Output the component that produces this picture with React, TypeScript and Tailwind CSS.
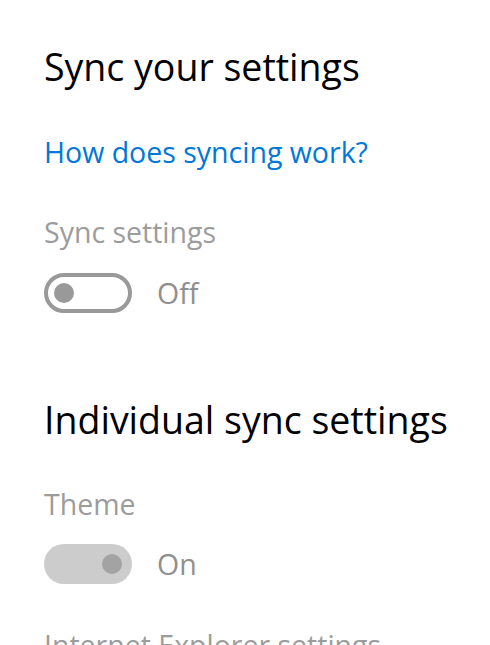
import React from "react";

function Toggle({ on }: { on: boolean }) {
  if (on) {
    return (
      <div className="flex h-[40px] w-[88px] items-center justify-end rounded-full bg-[#cccccc] pr-[10px]">
        <div className="h-[20px] w-[20px] rounded-full bg-[#a3a3a3]" />
      </div>
    );
  }
  return (
    <div className="flex h-[40px] w-[88px] items-center rounded-full border-[4px] border-[#999999] pl-[6px]">
      <div className="h-[20px] w-[20px] rounded-full bg-[#999999]" />
    </div>
  );
}

export default function App() {
  return (
    <div className="h-[645px] w-[490px] overflow-hidden bg-white pl-[44px] pt-[43px] font-['Open_Sans',sans-serif]">
      {/* Sync your settings */}
      <h1 className="text-[37.5px] leading-[48px] font-normal text-black">Sync your settings</h1>
      <a className="mt-[43px] block text-[28.5px] leading-[36px] text-[#0078d7]">How does syncing work?</a>

      <p className="mt-[44px] text-[28.5px] leading-[36px] text-[#9c9c9c]">Sync settings</p>
      <div className="mt-[23px] flex items-center gap-[25px]">
        <Toggle on={false} />
        <span className="text-[28.5px] leading-[36px] text-[#8f8f8f]">Off</span>
      </div>

      {/* Individual sync settings */}
      <h2 className="mt-[83px] whitespace-nowrap text-[37.5px] leading-[48px] font-normal text-black">Individual sync settings</h2>

      <p className="mt-[42px] text-[28.5px] leading-[36px] text-[#9c9c9c]">Theme</p>
      <div className="mt-[22px] flex items-center gap-[25px]">
        <Toggle on={true} />
        <span className="text-[28.5px] leading-[36px] text-[#8f8f8f]">On</span>
      </div>

      <p className="mt-[43px] whitespace-nowrap text-[28.5px] leading-[36px] text-[#9c9c9c]">Internet Explorer settings</p>
    </div>
  );
}
